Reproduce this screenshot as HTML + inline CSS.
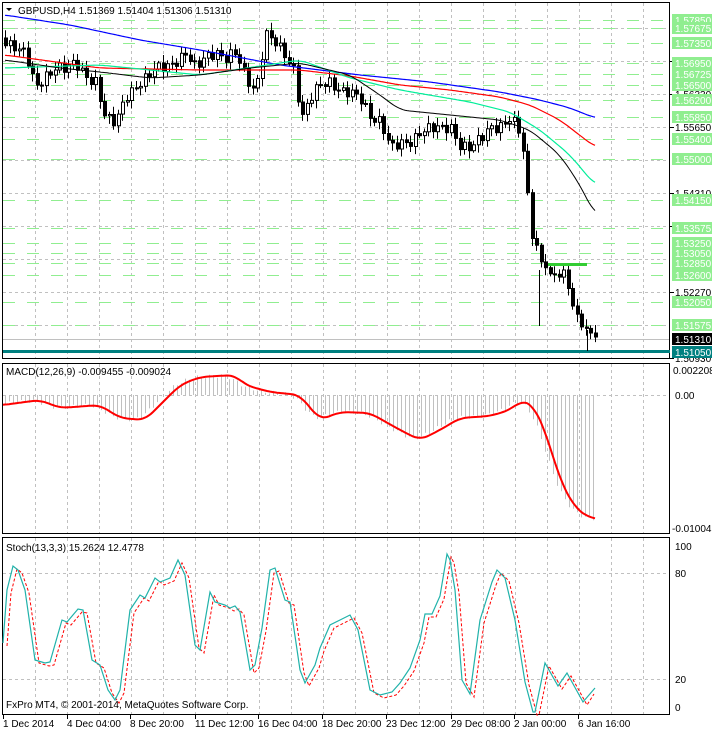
<!DOCTYPE html>
<html><head><meta charset="utf-8"><style>
body{margin:0;background:#fff;width:712px;height:732px;overflow:hidden}
svg{display:block}
text{font-family:"Liberation Sans",sans-serif;font-size:10px}
</style></head><body>
<svg id="s" width="712" height="732" xmlns="http://www.w3.org/2000/svg"></svg>
<script>
(function(){
var s=document.getElementById('s'),h='';
function f(n){return (Math.round(n*10)/10).toString();}
function interp(pts,x){if(x<=pts[0][0])return pts[0][1];for(var k=0;k<pts.length-1;k++){if(x<=pts[k+1][0]){var a=pts[k],b=pts[k+1];var t=(x-a[0])/(b[0]-a[0]);return a[1]+(b[1]-a[1])*t;}}return pts[pts.length-1][1];}
function smooth(pts){var o=[];for(var x=pts[0][0];x<=pts[pts.length-1][0];x+=2){var sum=0,n=0;for(var d=-8;d<=8;d+=2){sum+=interp(pts,x+d);n++;}o.push([x,sum/n]);}return o;}
function poly(pts,c,w,extra){return '<polyline fill="none" stroke="'+c+'" stroke-width="'+w+'" '+(extra||'')+' points="'+pts.map(function(p){return f(p[0])+','+f(p[1])}).join(' ')+'"/>';}
function ln(x1,y1,x2,y2,st){return '<line x1="'+f(x1)+'" y1="'+f(y1)+'" x2="'+f(x2)+'" y2="'+f(y2)+'" '+st+'/>';}
h+='<rect x="2.5" y="2.5" width="667" height="356" fill="none" stroke="#000"/>';
h+='<rect x="2.5" y="363.5" width="667" height="170" fill="none" stroke="#000"/>';
h+='<rect x="2.5" y="537.5" width="667" height="177" fill="none" stroke="#000"/>';
var gx;
for(gx=35;gx<669;gx+=32){[[3,358],[364,533],[538,714]].forEach(function(r){h+=ln(gx+.5,r[0],gx+.5,r[1],'stroke="#c0c0c0" stroke-dasharray="3,3"');});}
[28,61,94,127,160,193,226,259,292,325].forEach(function(y){h+=ln(3,y+.5,669,y+.5,'stroke="#c0c0c0" stroke-dasharray="3,3"');});
var G=[[20,'1.57850'],[28,'1.57675'],[43,'1.57350'],[63,'1.56950'],[74,'1.56725'],[85,'1.56500'],[100,'1.56200'],[117,'1.55850'],[139,'1.55400'],[159,'1.55000'],[200,'1.54150'],[228,'1.53575'],[243,'1.53250'],[253,'1.53050'],[263,'1.52850'],[275,'1.52600'],[302,'1.52050'],[325,'1.51575']];
G.forEach(function(g){h+=ln(3,g[0]+.5,669,g[0]+.5,'stroke="#90ee90" stroke-dasharray="12,12"');});
h+=ln(3,339.5,669,339.5,'stroke="#c0c0c0"');
h+='<rect x="3" y="350" width="667" height="3" fill="#008080"/>';
var C=[[3,40],[15,45],[25,55],[35,90],[45,75],[55,65],[65,70],[75,65],[85,75],[95,80],[105,120],[115,125],[125,95],[135,85],[145,80],[155,70],[165,65],[175,60],[185,55],[195,70],[205,55],[215,50],[225,60],[235,55],[245,75],[255,90],[265,35],[275,45],[285,55],[295,70],[300,120],[310,100],[320,85],[330,80],[340,90],[350,95],[360,100],[370,115],[380,120],[390,150],[400,145],[410,140],[420,130],[430,130],[440,130],[450,125],[460,145],[470,150],[480,140],[490,125],[500,125],[510,120],[520,135],[525,170],[530,230],[535,240],[540,260],[545,265],[550,280],[555,275],[560,280],[565,270],[570,300],[575,310],[580,320],[585,330],[590,335],[595,338]];
var prev=38,cx;
for(cx=5;cx<=595;cx+=4.5){var ii=cx/4.5;var amp=cx>520?3:5;var c=interp(C,cx)+Math.sin(ii*2.3)*amp+Math.sin(ii*0.7)*3;var o=prev;
var hi=Math.min(o,c)-2-Math.abs(Math.sin(ii*1.7))*6,lo=Math.max(o,c)+2+Math.abs(Math.cos(ii*1.3))*6;var xx=Math.round(cx);
h+=ln(xx+.5,hi,xx+.5,lo,'stroke="#000"');
var bt=Math.min(o,c),bh=Math.max(1,Math.abs(o-c));
h+='<rect x="'+(xx-1+.5)+'" y="'+f(bt)+'" width="3" height="'+f(bh)+'" fill="'+(c<o?'#fff':'#000')+'" stroke="#000"/>';prev=c;}
h+=ln(539.5,270,539.5,326,'stroke="#000"')+ln(587.5,330,587.5,351,'stroke="#000"');
h+='<rect x="548" y="263" width="39" height="3" fill="#32cd32"/>';
h+=poly(smooth([[5,15],[70,25],[140,40],[200,50],[280,65],[360,75],[430,82],[500,92],[540,100],[570,108],[595,118]]),'#0000ff',1.2);
h+=poly(smooth([[5,55],[100,68],[200,70],[300,70],[350,76],[400,85],[450,90],[500,97],[530,105],[560,120],[595,147]]),'#ff0000',1.2);
h+=poly(smooth([[5,68],[100,65],[200,75],[300,60],[350,78],[400,90],[470,102],[510,112],[540,130],[570,155],[595,185]]),'#00ee99',1.2);
h+=poly(smooth([[5,60],[60,68],[100,72],[150,78],[200,75],[250,68],[300,63],[350,75],[380,95],[400,110],[450,115],[500,120],[530,130],[560,155],[580,185],[595,215]]),'#000',1);
var M=smooth([[3,405],[40,400],[60,408],[100,405],[120,418],[145,420],[160,405],[180,385],[200,377],[235,375],[245,385],[270,392],[300,395],[320,420],[340,412],[370,413],[400,430],[420,440],[440,430],[460,418],[490,416],[510,410],[522,400],[533,405],[545,430],[560,480],[575,508],[590,518],[596,519]]);
h+=ln(3,395.5,669,395.5,'stroke="#c0c0c0" stroke-dasharray="3,3"');
var mx;
for(mx=5;mx<=596;mx+=4){var v=interp(M,Math.min(596,mx+6))+Math.sin(mx*0.5)*2;h+=ln(mx+.5,395,mx+.5,v,'stroke="#c0c0c0"');}
h+=poly(M,'#ff0000',2);
h+=ln(3,573.5,669,573.5,'stroke="#c0c0c0" stroke-dasharray="3,3"')+ln(3,679.5,669,679.5,'stroke="#c0c0c0" stroke-dasharray="3,3"');
var S=[[3,643],[7,590],[13,566],[18,570],[25,590],[35,660],[45,663],[50,662],[62,620],[67,622],[78,609],[83,610],[92,660],[100,665],[108,690],[115,700],[120,690],[130,610],[140,595],[145,598],[155,578],[160,582],[170,578],[178,560],[185,575],[195,645],[200,650],[210,592],[215,602],[225,605],[230,608],[235,606],[240,612],[250,670],[255,665],[262,628],[270,570],[275,568],[285,600],[290,602],[300,670],[305,683],[315,665],[320,648],[330,625],[340,620],[350,615],[358,630],[370,690],[380,695],[392,692],[400,683],[410,668],[420,640],[425,614],[432,614],[440,596],[447,554],[450,560],[455,590],[462,680],[470,694],[480,620],[492,582],[497,570],[500,573],[505,578],[515,620],[525,682],[533,712],[535,712],[545,663],[558,686],[567,673],[583,702],[595,688]];
var R=S.map(function(p){return [p[0]+4,p[1]+3]});R[R.length-1]=[594,694];
h+=poly(R,'#ff0000',1,'stroke-dasharray="3,2"');
h+=poly(S,'#20b2aa',1.2);
[[127,'1.55650'],[193,'1.54310'],[292,'1.52270'],[94,'1.56330'],[61,'1.56910'],[226,'1.53630'],[358,'1.50930']].forEach(function(l){h+=ln(670,l[0]+.5,674,l[0]+.5,'stroke="#000"')+'<text x="675" y="'+(l[0]+4)+'" fill="#000">'+l[1]+'</text>';});
G.forEach(function(g){h+='<rect x="672" y="'+(g[0]-6)+'" width="40" height="12" fill="#90ee90"/><text x="675" y="'+(g[0]+4)+'" fill="#fff">'+g[1]+'</text>';});
h+='<rect x="672" y="333" width="40" height="12" fill="#000"/><text x="675" y="343" fill="#fff">1.51310</text>';
h+='<rect x="672" y="346" width="40" height="12" fill="#008080"/><text x="675" y="356" fill="#fff">1.51050</text>';
h+='<text x="673" y="374">0.002208</text><text x="675" y="399">0.00</text><text x="672" y="532">-0.010047</text>';
h+='<text x="675" y="550">100</text><text x="675" y="577">80</text><text x="675" y="683">20</text><text x="675" y="711">0</text>';
h+='<path d="M6 8 L12 8 L9 11 Z" fill="#000"/><text x="18" y="14" fill="#000">GBPUSD,H4  1.51369 1.51404 1.51306 1.51310</text>';
h+='<text x="6" y="375">MACD(12,26,9) -0.009455 -0.009024</text>';
h+='<text x="6" y="551">Stoch(13,3,3) 15.2624 12.4778</text>';
h+='<text x="6" y="708">FxPro MT4, © 2001-2014, MetaQuotes Software Corp.</text>';
[[3,'1 Dec 2014'],[67,'4 Dec 04:00'],[130,'8 Dec 20:00'],[195,'11 Dec 12:00'],[258,'16 Dec 04:00'],[322,'18 Dec 20:00'],[386,'23 Dec 12:00'],[451,'29 Dec 08:00'],[514,'2 Jan 00:00'],[578,'6 Jan 16:00']].forEach(function(l){h+=ln(l[0]+.5,715,l[0]+.5,719,'stroke="#000"')+'<text x="'+l[0]+'" y="727">'+l[1]+'</text>';});
s.innerHTML=h;
})();
</script>
</body></html>
